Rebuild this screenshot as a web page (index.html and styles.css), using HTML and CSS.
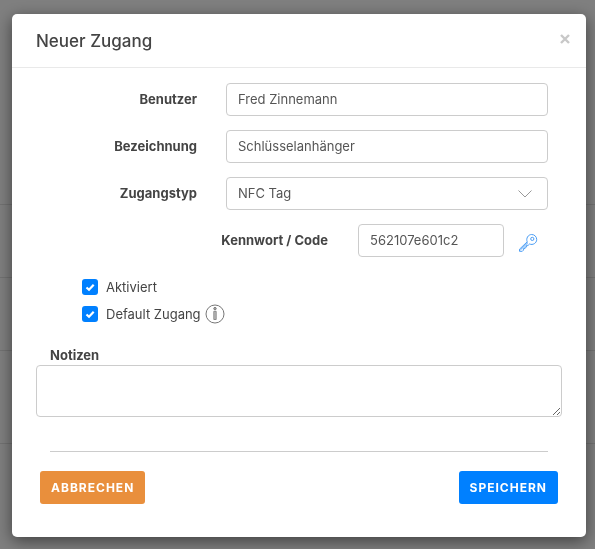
FILE: index.html
```html
<!DOCTYPE html>
<html lang="de">
<head>
    <meta charset="UTF-8">
    <meta name="viewport" content="width=device-width, initial-scale=1.0">
    <title>Neuer Zugang</title>
    <link rel="stylesheet" href="styles.css">
</head>
<body>
    <div class="page-rows" aria-hidden="true">
        <div class="page-row page-row-top"></div>
        <div class="page-row"></div>
        <div class="page-row"></div>
        <div class="page-row page-row-tall"></div>
    </div>

    <div class="backdrop">
        <div class="modal" role="dialog" aria-labelledby="modal-title">
            <header class="modal-header">
                <h1 id="modal-title">Neuer Zugang</h1>
                <button type="button" class="close" aria-label="Schließen">
                    <svg width="10" height="10" viewBox="0 0 10 10"><path d="M1 1l8 8M9 1l-8 8" fill="none" stroke="currentColor" stroke-width="2.4"/></svg>
                </button>
            </header>

            <form class="modal-body">
                <div class="fields">
                    <div class="form-row">
                        <label for="benutzer">Benutzer</label>
                        <input class="control" type="text" id="benutzer" value="Fred Zinnemann">
                    </div>
                    <div class="form-row">
                        <label for="bezeichnung">Bezeichnung</label>
                        <input class="control" type="text" id="bezeichnung" value="Schlüsselanhänger">
                    </div>
                    <div class="form-row">
                        <label for="zugangstyp">Zugangstyp</label>
                        <div class="select-wrap">
                            <select class="control" id="zugangstyp">
                                <option>NFC Tag</option>
                            </select>
                            <svg class="chevron" width="14" height="8" viewBox="0 0 14 8"><path d="M.5 .5L7 7 13.500 .5" fill="none" stroke="#999" stroke-width="1"/></svg>
                        </div>
                    </div>
                    <div class="form-row code-row">
                        <label for="code">Kennwort / Code</label>
                        <input class="control" type="text" id="code" value="562107e601c2">
                        <button type="button" class="key" aria-label="Code erzeugen">
                            <svg width="20" height="20" viewBox="0 0 20 20" fill="none" stroke="currentColor" stroke-width="1" stroke-linejoin="round">
                                <path d="M9.200 8.800C7.800 5.600 10 1.500 13.700 1.500a5 5 0 0 1 5 5c0 3.700-3.900 5.900-7.200 4.500l-1.300 1.300H8.600v1.700H7v1.600H5.400v1.600L4.300 18.300H1.500v-2.100z"/>
                                <path d="M2.300 17L10 9.500"/>
                                <circle cx="14.300" cy="5.900" r="1.600"/>
                            </svg>
                        </button>
                    </div>
                </div>

                <div class="checks">
                    <div class="check">
                        <input type="checkbox" id="aktiviert" checked>
                        <label for="aktiviert">Aktiviert</label>
                    </div>
                    <div class="check">
                        <input type="checkbox" id="default-zugang" checked>
                        <label for="default-zugang">Default Zugang</label>
                        <svg class="info" width="20" height="20" viewBox="0 0 20 20" fill="none" stroke="#777">
                            <circle cx="10" cy="10" r="9"/>
                            <circle cx="10" cy="4.600" r="1.200" fill="#aaa"/>
                            <path d="M8.800 7.300h2.400v8.200H8.800z" fill="#bbb" stroke-width=".8"/>
                        </svg>
                    </div>
                </div>

                <div class="notes">
                    <label for="notizen">Notizen</label>
                    <textarea id="notizen"></textarea>
                </div>

                <hr>

                <div class="actions">
                    <button type="button" class="btn btn-cancel">Abbrechen</button>
                    <button type="submit" class="btn btn-save">Speichern</button>
                </div>
            </form>
        </div>
    </div>
</body>
</html>
```
FILE: styles.css
```css
* {
    margin: 0;
    padding: 0;
    box-sizing: border-box;
}

body {
    font-family: 'Inter', sans-serif;
    font-size: 13px;
    line-height: 20px;
    color: #444;
    background-color: #fff;
    min-height: 100vh;
}

/* list behind the dialog */
.page-rows {
    position: fixed;
    inset: 0;
}

.page-row {
    height: 73px;
    border-bottom: 1px solid #e4e4e4;
}

.page-row-top {
    height: 205px;
}

.page-row-tall {
    height: 93px;
}

.backdrop {
    position: relative;
    min-height: 100vh;
    padding: 14px 9px 12px 12px;
    background-color: rgba(0, 0, 0, 0.5);
}

.modal {
    background-color: #fff;
    border-radius: 5px;
    box-shadow: 0 4px 16px rgba(0, 0, 0, 0.5);
}

.modal-header {
    display: flex;
    justify-content: space-between;
    align-items: flex-start;
    padding: 15px 16px 14px 24px;
    border-bottom: 1px solid #e9e9e9;
}

h1 {
    font-size: 17px;
    line-height: 24px;
    font-weight: 500;
}

.close {
    display: flex;
    padding: 5px 0;
    border: none;
    background: none;
    color: #c8c8c8;
    cursor: pointer;
}

.modal-body {
    padding: 15px 24px 33px;
}

.fields {
    display: grid;
    gap: 14px;
    padding: 0 14px;
}

.form-row {
    display: grid;
    grid-template-columns: 147px 1fr;
    column-gap: 29px;
    align-items: center;
}

.form-row label {
    padding-bottom: 2px;
    font-weight: 700;
    text-align: right;
}

.code-row {
    grid-template-columns: 278px 1fr 44px;
    column-gap: 0;
}

.code-row .control {
    margin-left: 30px;
    width: auto;
    min-width: 0;
}

.control {
    width: 100%;
    height: 33px;
    padding: 0 11px 2px;
    border: 1px solid #ccc;
    border-radius: 4px;
    background-color: #fff;
    font-family: inherit;
    font-size: 13px;
    color: #555;
}

select.control {
    appearance: none;
}

.select-wrap {
    position: relative;
}

.chevron {
    position: absolute;
    right: 16px;
    top: 13px;
    pointer-events: none;
}

.key {
    display: flex;
    justify-content: flex-end;
    padding: 4px 10px 0 0;
    border: none;
    background: none;
    color: #4a9df5;
    cursor: pointer;
}

.checks {
    padding: 16px 46px 0;
}

.check {
    display: flex;
    align-items: center;
    height: 27px;
}

.check input {
    appearance: none;
    width: 16px;
    height: 16px;
    margin-right: 8px;
    border-radius: 3px;
    background: #0080ff url("data:image/svg+xml,%3Csvg xmlns='http://www.w3.org/2000/svg' viewBox='0 0 16 16'%3E%3Cpath d='M4.500 8.500l2.500 2.300 4.700-5' fill='none' stroke='white' stroke-width='2.200'/%3E%3C/svg%3E") center / 16px;
}

.info {
    margin-left: 4px;
}

.notes {
    padding-top: 18px;
}

.notes label {
    display: block;
    padding-left: 14px;
    font-weight: 700;
}

.notes textarea {
    display: block;
    width: 100%;
    height: 52px;
    padding: 6px 11px;
    border: 1px solid #ccc;
    border-radius: 4px;
    font-family: inherit;
    font-size: 13px;
    resize: vertical;
}

hr {
    margin: 34px 14px 19px;
    border: none;
    border-top: 1px solid #ccc;
}

.actions {
    display: flex;
    justify-content: space-between;
    padding: 0 4px;
}

.btn {
    height: 33px;
    padding: 0 11px;
    border: none;
    border-radius: 3px;
    color: #fff;
    font-family: inherit;
    font-size: 12px;
    font-weight: 700;
    letter-spacing: 1px;
    text-transform: uppercase;
    cursor: pointer;
}

.btn-cancel {
    background-color: #e98f3c;
}

.btn-save {
    background-color: #0080ff;
}
```
